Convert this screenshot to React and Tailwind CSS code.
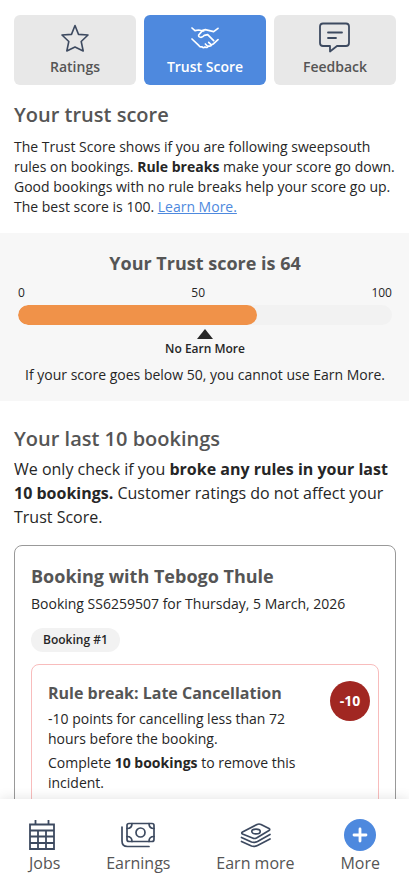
import React, { useState } from 'react';

const StarIcon = () => (
  <svg width="28" height="28" viewBox="0 0 28 28" fill="none" stroke="currentColor" strokeWidth="1.6" strokeLinecap="round" strokeLinejoin="round">
    <path d="M14 1.5 L17.5 10.4 L27 11 L20.2 17.5 L22.2 27 L14 23 L5.8 27 L7.8 17.5 L1 11 L10.5 10.4 Z" />
  </svg>
);

const HandshakeIcon = () => (
  <svg width="28" height="22" viewBox="0 0 84 66" fill="none" stroke="currentColor" strokeWidth="5" strokeLinecap="round" strokeLinejoin="round">
    <path d="M3 3 L12 11 L23 9 L38 12" />
    <path d="M81 4 L68 14 L43 8 L35 10 L23 24 Q22 31 30 31 Q36 30 40 25 L50 23 L68 41" />
    <path d="M3 36 L24 56 Q28 61 33 59 Q37 64 42 60 Q49 64 52 57 Q60 59 62 53 L68 50 L81 38" />
    <path d="M43 51 L49 57 M53 46 L60 53" />
  </svg>
);

const FeedbackIcon = () => (
  <svg width="32" height="32" viewBox="0 0 32 32" fill="none" stroke="currentColor" strokeWidth="1.8" strokeLinecap="round" strokeLinejoin="round">
    <path d="M4 1.5 H27 Q30 1.5 30 4.5 V21 Q30 24 27 24 H18 L11 29.5 V24 H4 Q1 24 1 21 V4.5 Q1 1.5 4 1.5 Z" />
    <path d="M9 10.5 H23 M9 16 H17" />
  </svg>
);

const CalendarIcon = () => (
  <svg width="26" height="30" viewBox="0 0 26 30" fill="none" stroke="currentColor" strokeWidth="1.8">
    <path d="M1 4.5 H25 V29 H1 Z M1 10.5 H25 M1 16.5 H25 M1 23 H25 M9 10.5 V29 M17 10.5 V29" />
    <path d="M6.5 0 V4.5 M19.5 0 V4.5" />
  </svg>
);

const BanknotesIcon = () => (
  <svg width="34" height="26" viewBox="0 0 34 26" fill="none" stroke="currentColor" strokeWidth="1.7" strokeLinecap="round" strokeLinejoin="round">
    <rect x="6" y="1.5" width="27" height="18" rx="2" />
    <circle cx="19.5" cy="10.5" r="4.5" />
    <path d="M11 1.5 Q11 6.5 6 6.5 M28 1.5 Q28 6.5 33 6.5 M11 19.5 Q11 14.5 6 14.5 M28 19.5 Q28 14.5 33 14.5" />
    <path d="M1 5 V19 Q1 24.5 6.5 24.5 H28" />
  </svg>
);

const CashStackIcon = () => (
  <svg width="32" height="26" viewBox="0 0 32 26" fill="none" stroke="currentColor" strokeWidth="1.7" strokeLinecap="round" strokeLinejoin="round">
    <path d="M3.5 10 L18 2.5 Q20 1.5 22 2.5 L30 6.5 Q31.5 7.5 30 8.5 L17.5 16 Q15.5 17 13.5 16 L3.5 12 Q2 11 3.5 10 Z" />
    <ellipse cx="17" cy="9.5" rx="4.2" ry="2.4" />
    <path d="M2.5 15.5 L12.5 20 Q15.5 21 18.5 19.5 L31 12.5" />
    <path d="M2.5 19.5 L12.5 24 Q15.5 25 18.5 23.5 L31 17" />
  </svg>
);

const PlusIcon = () => (
  <svg width="32" height="32" viewBox="0 0 32 32" fill="none">
    <circle cx="16" cy="16" r="16" fill="#4e89de" />
    <path d="M16 10 V22 M10 16 H22" stroke="white" strokeWidth="2.8" strokeLinecap="round" />
  </svg>
);

const tabs = [
  { id: 'ratings', label: 'Ratings', icon: StarIcon },
  { id: 'trust', label: 'Trust Score', icon: HandshakeIcon },
  { id: 'feedback', label: 'Feedback', icon: FeedbackIcon },
];

const navItems = [
  { label: 'Jobs', icon: CalendarIcon },
  { label: 'Earnings', icon: BanknotesIcon },
  { label: 'Earn more', icon: CashStackIcon },
  { label: 'More', icon: PlusIcon },
];

const score = 64;

const App = () => {
  const [activeTab, setActiveTab] = useState('trust');

  return (
    <div className="flex h-screen flex-col bg-white font-['Open_Sans',sans-serif] text-[#262626] antialiased">
      <main className="min-h-0 flex-1 overflow-y-auto [scrollbar-width:none]">
        {/* Tabs */}
        <div className="grid grid-cols-3 gap-2 pt-[15px] pr-[13px] pl-3.5">
          {tabs.map(({ id, label, icon: Icon }) => (
            <button
              key={id}
              type="button"
              aria-pressed={activeTab === id}
              onClick={() => setActiveTab(id)}
              className={`flex h-[70px] flex-col items-center rounded-md pt-[7px] text-sm font-semibold ${
                activeTab === id ? 'bg-[#4e89de] text-white' : 'bg-[#e8e8e8] text-[#555555]'
              }`}
            >
              <span className={`flex h-8 items-center ${activeTab === id ? 'text-white' : 'text-[#3d4a60]'}`}>
                <Icon />
              </span>
              <span className="mt-[3px]">{label}</span>
            </button>
          ))}
        </div>

        <section className="py-4 pr-[13px] pl-3.5">
          <h2 className="text-xl leading-7 font-semibold text-[#555555]">Your trust score</h2>
          <p className="mt-2 text-sm leading-5">
            The Trust Score shows if you are following sweepsouth rules on bookings.{' '}
            <strong>Rule breaks</strong> make your score go down. Good bookings with no rule breaks
            help your score go up. The best score is 100.{' '}
            <a href="#learn-more" className="text-[#4e89de] underline">Learn More.</a>
          </p>
        </section>

        {/* Score */}
        <section className="bg-[#f7f7f7] py-4 pr-[17px] pl-[18px] text-center">
          <h3 className="text-lg leading-7 font-bold text-[#555555]">Your Trust score is {score}</h3>
          <div className="mt-2 flex justify-between text-xs leading-4">
            <span>0</span>
            <span>50</span>
            <span>100</span>
          </div>
          <div className="mt-1 h-5 overflow-hidden rounded-full bg-[#f2f2f2]">
            <div className="h-full rounded-full bg-[#f09249]" style={{ width: `${score}%` }} />
          </div>
          <svg className="mx-auto mt-1" width="16" height="10" viewBox="0 0 16 10" fill="#262626">
            <path d="M8 0 L16 10 H0 Z" />
          </svg>
          <p className="mt-0.5 text-xs leading-4 font-semibold">No Earn More</p>
          <p className="mt-2 text-sm leading-5">If your score goes below 50, you cannot use Earn More.</p>
        </section>

        <section className="pt-6 pr-[13px] pb-4 pl-3.5">
          <h2 className="text-xl leading-7 font-semibold text-[#555555]">Your last 10 bookings</h2>
          <p className="mt-1 text-base leading-6">
            We only check if you <strong>broke any rules in your last 10 bookings.</strong> Customer
            ratings do not affect your Trust Score.
          </p>

          {/* Booking card */}
          <article className="mt-4 rounded-lg border border-[#999999] p-4">
            <h3 className="text-lg leading-7 font-bold text-[#555555]">Booking with Tebogo Thule</h3>
            <p className="mt-1 text-sm leading-5">Booking SS6259507 for Thursday, 5 March, 2026</p>
            <span className="mt-3.5 flex h-6 w-fit items-center rounded-full bg-[#f2f2f2] px-3 text-xs font-semibold">
              Booking #1
            </span>
            <div className="mt-3 flex items-start gap-4 rounded-lg border border-[#f8bcbc] py-4 pr-2 pl-4">
              <div className="min-w-0 flex-1">
                <h4 className="text-base leading-6 font-bold text-[#555555]">Rule break: Late Cancellation</h4>
                <p className="mt-1 text-sm leading-5">
                  -10 points for cancelling less than 72 hours before the booking.
                </p>
                <p className="mt-1 text-sm leading-5">
                  Complete <strong>10 bookings</strong> to remove this incident.
                </p>
              </div>
              <span className="flex size-10 shrink-0 items-center justify-center rounded-full bg-[#a12722] text-sm font-bold text-white">
                -10
              </span>
            </div>
          </article>
        </section>
      </main>

      {/* Bottom navigation */}
      <nav className="relative flex justify-between bg-white px-[29px] pt-5 pb-[18px] shadow-[0_0_12px_rgba(0,0,0,0.12)]">
        {navItems.map(({ label, icon: Icon }) => (
          <a
            key={label}
            href="#"
            className="flex flex-col items-center text-base leading-6 text-[#555555] first:items-start"
          >
            <span className="flex h-8 items-center text-[#3d4a60]">
              <Icon />
            </span>
            {label}
          </a>
        ))}
      </nav>
    </div>
  );
};

export default App;
